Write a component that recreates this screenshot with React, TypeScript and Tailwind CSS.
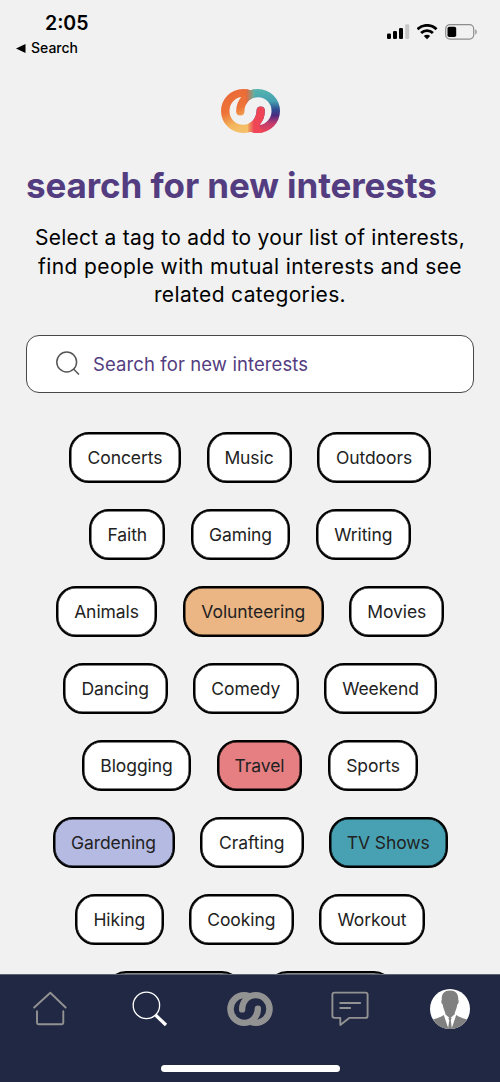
import React from 'react';
import clsx from 'clsx';

interface Tag {
  label: string;
  size: string;
  color?: string;
}

const tagRows: Tag[][] = [
  [
    { label: 'Concerts', size: 'w-[112px]' },
    { label: 'Music', size: 'w-[85px]' },
    { label: 'Outdoors', size: 'w-[114px]' },
  ],
  [
    { label: 'Faith', size: 'w-[76px]' },
    { label: 'Gaming', size: 'w-[99.5px]' },
    { label: 'Writing', size: 'w-[95px]' },
  ],
  [
    { label: 'Animals', size: 'w-[101.5px]' },
    { label: 'Volunteering', size: 'w-[141px]', color: 'bg-[#ecb584]' },
    { label: 'Movies', size: 'w-[95px]' },
  ],
  [
    { label: 'Dancing', size: 'w-[104.5px]' },
    { label: 'Comedy', size: 'w-[105.5px]' },
    { label: 'Weekend', size: 'w-[113px]' },
  ],
  [
    { label: 'Blogging', size: 'w-[109.5px]' },
    { label: 'Travel', size: 'w-[85.5px]', color: 'bg-[#e67f82]' },
    { label: 'Sports', size: 'w-[90.5px]' },
  ],
  [
    { label: 'Gardening', size: 'w-[122px]', color: 'bg-[#b5bae3]' },
    { label: 'Crafting', size: 'w-[103.5px]' },
    { label: 'TV Shows', size: 'w-[118.5px]', color: 'bg-[#48a1b2]' },
  ],
  [
    { label: 'Hiking', size: 'w-[88.5px]' },
    { label: 'Cooking', size: 'w-[104.5px]' },
    { label: 'Workout', size: 'w-[106px]' },
  ],
  [
    { label: '', size: 'w-[136px]' },
    { label: '', size: 'w-[127px]' },
  ],
];

// two joined rings with the S-shaped gap cut out of them
const logoPath =
  'M22 0Q26 0 29.5 1.3Q33 0 37 0A22 22 0 0 1 37 44Q33 44 29.5 42.7Q26 44 22 44A22 22 0 0 1 22 0Z' +
  'M20.300 8A14 14 0 0 0 8.500 22A13.500 13.500 0 0 0 22 35.800C30 35.800 35.200 30 35.600 21.500A4.100 4.100 0 0 1 43.800 21.500C43.900 27.500 42 32 38.700 36A14 14 0 0 0 50.500 22A13.500 13.500 0 0 0 37 8.200C29 8.200 23.800 14 23.400 22.500A4.100 4.100 0 0 1 15.200 22.500C15.100 16.500 17 12 20.300 8Z';

const StatusBar: React.FC = () => {
  return (
    <div className="flex h-[62px] justify-between">
      <div className="pl-4 pt-[9px]">
        <div className="pl-[29px] text-[19.5px] leading-[28px] font-semibold">2:05</div>
        <div className="mt-px flex items-center gap-[5px] text-[14px] leading-[20px] font-medium">
          <svg width="10" height="9" viewBox="0 0 10 9">
            <path d="M0 4.5 9.5 0v9z" />
          </svg>
          Search
        </div>
      </div>
      <div className="mt-[24px] mr-[23px] flex h-[16px] items-start gap-[7px]">
        <svg width="23" height="15" viewBox="0 0 23 15">
          <rect x="0" y="9.5" width="4" height="5.5" rx="1.2" />
          <rect x="6" y="7" width="4" height="8" rx="1.2" />
          <rect x="12" y="4" width="4" height="11" rx="1.2" />
          <rect x="18.2" y="0.3" width="4" height="14.7" rx="1.2" fill="#c6c6c6" />
        </svg>
        <svg width="21" height="16" viewBox="0 0 21 16" fill="none" stroke="#000" strokeWidth="2.8">
          <path d="M.5 5.2a13.6 13.6 0 0 1 19 0" />
          <path d="M4.1 9a8.5 8.5 0 0 1 11.8 0" />
          <path d="M10 15.2 6.8 12a4.6 4.6 0 0 1 6.4 0z" fill="#000" stroke="none" />
        </svg>
        <svg width="32" height="16" viewBox="0 0 32 16">
          <rect x="0.7" y="0.7" width="28" height="14.4" rx="4.2" fill="none" stroke="#8d8d8d" strokeWidth="1.2" />
          <rect x="2.5" y="2.7" width="8.7" height="10.4" rx="1.8" />
          <path d="M30.3 5.3c1.9.8 1.9 4.4 0 5.2z" fill="#8d8d8d" />
        </svg>
      </div>
    </div>
  );
};

const BrandLogo: React.FC = () => {
  return (
    <svg width="59" height="44" viewBox="0 0 59 44">
      <defs>
        <clipPath id="rings">
          <path d={logoPath} clipRule="evenodd" />
        </clipPath>
        <linearGradient id="warm" x1="0" y1="0" x2="0.3" y2="1">
          <stop offset="0" stopColor="#ea6638" />
          <stop offset="0.55" stopColor="#ed7437" />
          <stop offset="0.85" stopColor="#f3b35d" />
          <stop offset="1" stopColor="#f4bf67" />
        </linearGradient>
        <linearGradient id="cool" x1="0" y1="0" x2="0" y2="1">
          <stop offset="0" stopColor="#55b5ae" />
          <stop offset="0.28" stopColor="#459fb0" />
          <stop offset="0.46" stopColor="#2f4d93" />
          <stop offset="0.6" stopColor="#4b2a80" />
          <stop offset="0.78" stopColor="#c23a6d" />
          <stop offset="1" stopColor="#ee4557" />
        </linearGradient>
        <linearGradient id="topBlend">
          <stop offset="0" stopColor="#ea6638" />
          <stop offset="1" stopColor="#55b5ae" />
        </linearGradient>
        <linearGradient id="bottomBlend">
          <stop offset="0" stopColor="#f3a95e" />
          <stop offset="1" stopColor="#ee4557" />
        </linearGradient>
      </defs>
      <g clipPath="url(#rings)">
        <rect width="30" height="44" fill="url(#warm)" />
        <rect x="29" width="30" height="44" fill="url(#cool)" />
        <rect x="25" width="9" height="17" fill="url(#topBlend)" />
        <rect x="27" y="27" width="6" height="17" fill="url(#bottomBlend)" />
        <path d="M33 17h11.5v12L38 36l5 8H33z" fill="#ee4557" />
      </g>
    </svg>
  );
};

const BottomNav: React.FC = () => {
  return (
    <nav className="h-[108px] shrink-0 border-t border-[#5d6372] bg-[#212843]">
      <div className="grid h-[67px] grid-cols-5 place-items-center">
        <svg width="34" height="36" viewBox="0 0 34 36" fill="none" stroke="#929292" strokeWidth="1.9" strokeLinecap="round" strokeLinejoin="round">
          <path d="M1.2 16.5 17.3 1.8l15.3 14.7" />
          <path d="M4 20.3v11.5q0 1.5 1.5 1.5h23.3q1.5 0 1.5-1.5V20.3" />
        </svg>
        <svg width="36" height="36" viewBox="0 0 36 36" fill="none" stroke="#fff">
          <circle cx="14.4" cy="14.4" r="13.2" strokeWidth="1.3" />
          <path d="m23.5 24 10.5 10" strokeWidth="3.2" />
        </svg>
        <svg width="46" height="34" viewBox="0 0 59 44" fill="#929292">
          <path d={logoPath} fillRule="evenodd" />
        </svg>
        <svg width="38" height="36" viewBox="0 0 38 36" fill="none" stroke="#929292" strokeWidth="1.9" strokeLinecap="round" strokeLinejoin="round">
          <path d="M3.5 1.6h31Q36.6 1.6 36.6 3.7v21.1q0 2.1-2.1 2.1H18.2L9.3 34V26.9H3.5q-2.1 0-2.1-2.1V3.7Q1.4 1.6 3.5 1.6z" />
          <path d="M9.2 12h20M9.2 17h10" />
        </svg>
        <svg width="40" height="40" viewBox="0 0 40 40">
          <defs>
            <clipPath id="avatar">
              <circle cx="20" cy="20" r="20" />
            </clipPath>
          </defs>
          <g clipPath="url(#avatar)">
            <rect width="40" height="40" fill="#fff" />
            <path d="M20 1.5c6 0 8.7 3.6 8.2 9.2 1 1 .3 4-.9 4.7-.5 3.8-2 7-2.6 8.5v1.3L20 29.5l-4.7-4.3v-1.3c-.6-1.5-2.1-4.7-2.6-8.5-1.2-.7-1.9-3.7-.9-4.7C11.3 5.1 14 1.5 20 1.5z" fill="#808080" />
            <path d="M13.8 26 18.5 40H0l3-9.5q6-1.5 10.8-4.5zM26.2 26 21.5 40H40l-3-9.5q-6-1.5-10.8-4.5z" fill="#808080" />
            <path d="M18.4 29h3.2l-.8 2.5 1.2 8.5h-4l1.2-8.5z" fill="#808080" />
          </g>
        </svg>
      </div>
      <div className="mx-auto mt-[23px] h-[7px] w-[179px] rounded-full bg-white" />
    </nav>
  );
};

export default function App() {
  return (
    <div className="flex h-[1082px] w-[500px] flex-col overflow-hidden bg-[#f1f1f1] font-['Inter',sans-serif] text-black">
      <StatusBar />
      <main className="flex min-h-0 flex-1 flex-col overflow-hidden px-[26px]">
        <div className="mt-[27px] flex justify-center">
          <BrandLogo />
        </div>
        <h1 className="mt-[29px] text-[35px] leading-[46px] font-bold tracking-[-0.1px] whitespace-nowrap text-[#533d80]">
          search for new interests
        </h1>
        <div className="mt-[16px] flex flex-col items-center text-[21px] leading-[28.6px] whitespace-nowrap">
          <span className="tracking-[0.25px]">Select a tag to add to your list of interests,</span>
          <span className="tracking-[0.4px]">find people with mutual interests and see</span>
          <span className="tracking-[0.35px]">related categories.</span>
        </div>
        <div className="mt-[25px] flex h-[58px] shrink-0 items-center rounded-[13px] border border-[#484848] bg-white pl-[29px]">
          <svg width="24" height="25" viewBox="0 0 24 25" fill="none" stroke="#555" strokeWidth="1.5">
            <circle cx="10.7" cy="11" r="9.9" />
            <path d="m17.5 18 5.500 5.500" />
          </svg>
          <span className="ml-[13px] pt-[2px] text-[18.5px] tracking-[0.1px] text-[#533d80]">Search for new interests</span>
        </div>
        <div className="mt-[39px] flex flex-col gap-[26px]">
          {tagRows.map((row, rowIndex) => (
            <div key={rowIndex} className="flex justify-center gap-[25.5px]">
              {row.map((tag, index) => (
                <button
                  key={index}
                  className={clsx(
                    'h-[51px] shrink-0 rounded-[20px] border-2 border-black pt-px text-[17.5px] tracking-[-0.08px] whitespace-nowrap text-[#222] shadow-[inset_0_0_0_0.5px_#000]',
                    tag.size,
                    tag.color ?? 'bg-white',
                  )}
                >
                  {tag.label}
                </button>
              ))}
            </div>
          ))}
        </div>
      </main>
      <BottomNav />
    </div>
  );
}
